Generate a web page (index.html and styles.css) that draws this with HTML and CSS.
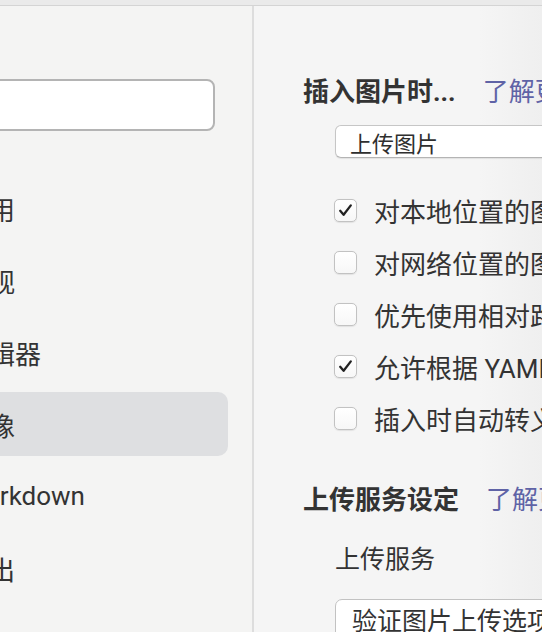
FILE: index.html
```html
<!DOCTYPE html>
<html lang="zh-CN">
<head>
<meta charset="utf-8">
<title>偏好设置 - 图像</title>
<link rel="stylesheet" href="styles.css">
</head>
<body>
<div class="titlebar"></div>
<div class="window">
  <aside class="sidebar">
    <div class="search"></div>
    <ul class="nav">
      <li class="nav-item">通用</li>
      <li class="nav-item">外观</li>
      <li class="nav-item">编辑器</li>
      <li class="nav-item active">图像</li>
      <li class="nav-item">Markdown</li>
      <li class="nav-item">导出</li>
    </ul>
  </aside>
  <main class="panel">
    <div class="section-head">
      <span class="section-title">插入图片时...</span>
      <span class="learn">了解更多</span>
    </div>
    <div class="select">上传图片</div>
    <div class="checks">
      <label class="check-row"><span class="box checked"><svg viewBox="0 0 23 23" width="23" height="23"><path d="M6.2 11.8 L9.6 15.8 L16.8 6.4" fill="none" stroke="#222" stroke-width="2.3" stroke-linecap="round" stroke-linejoin="round"/></svg></span><span class="check-text">对本地位置的图片应用上述规则</span></label>
      <label class="check-row"><span class="box"></span><span class="check-text">对网络位置的图片应用上述规则</span></label>
      <label class="check-row"><span class="box"></span><span class="check-text">优先使用相对路径</span></label>
      <label class="check-row"><span class="box checked"><svg viewBox="0 0 23 23" width="23" height="23"><path d="M6.2 11.8 L9.6 15.8 L16.8 6.4" fill="none" stroke="#222" stroke-width="2.3" stroke-linecap="round" stroke-linejoin="round"/></svg></span><span class="check-text">允许根据 YAML 设置自动上传图片</span></label>
      <label class="check-row"><span class="box"></span><span class="check-text">插入时自动转义图片 URL</span></label>
    </div>
    <div class="section-head second">
      <span class="section-title">上传服务设定</span>
      <span class="learn">了解更多</span>
    </div>
    <div class="field-label">上传服务</div>
    <div class="button">验证图片上传选项</div>
  </main>
</div>
</body>
</html>
```

FILE: styles.css
```css
html, body {
  margin: 0;
  padding: 0;
  width: 542px;
  height: 632px;
  overflow: hidden;
  background: #f4f4f3;
  font-family: Roboto, "Noto Sans CJK SC", "Noto Sans", sans-serif;
  color: #333;
}

.titlebar {
  height: 5px;
  background: #eaeaea;
  border-bottom: 1px solid #d4d4d4;
}

.window {
  display: flex;
  height: 626px;
}

.sidebar {
  flex: 0 0 252px;
  width: 252px;
  border-right: 2px solid #dddddd;
  background: #f4f4f3;
  padding-top: 73px;
  box-sizing: content-box;
  overflow: hidden;
}

.search {
  margin-left: -60px;
  width: 271px;
  height: 48px;
  border: 2px solid #b4b4b4;
  border-radius: 8px;
  background: #ffffff;
}

.nav {
  list-style: none;
  margin: 45px 0 0 -60px;
  padding: 0;
  width: 288px;
  display: flex;
  flex-direction: column;
  gap: 8px;
}

.nav-item {
  height: 64px;
  display: flex;
  align-items: center;
  padding-left: 23px;
  font-size: 26px;
  color: #333;
  border-radius: 10px;
  white-space: nowrap;
}

.nav-item.active {
  background: #dedfe1;
}

.panel {
  flex: 1;
  min-width: 0;
  overflow: hidden;
  background: linear-gradient(to right, #f5f5f5 0%, #f5f5f5 78%, #efefef 100%);
  padding-top: 66px;
  padding-left: 49px;
}

.section-head {
  height: 34px;
  display: flex;
  align-items: center;
  white-space: nowrap;
  font-size: 26px;
}

.section-head.second {
  margin-top: 36px;
}

.section-title {
  font-weight: bold;
  color: #333;
}

.learn {
  margin-left: 27px;
  color: #5f63a6;
}

.select {
  margin: 19px 0 0 32px;
  width: 260px;
  height: 31px;
  border: 1px solid #c6c6c6;
  border-bottom-color: #b4b4b4;
  border-radius: 6px;
  background: #ffffff;
  box-shadow: 0 1px 1px rgba(0, 0, 0, 0.08);
  display: flex;
  align-items: center;
  padding-left: 14px;
  font-size: 22px;
  color: #2f2f2f;
  white-space: nowrap;
}

.checks {
  margin: 26px 0 0 31px;
  display: flex;
  flex-direction: column;
}

.check-row {
  height: 52px;
  display: flex;
  align-items: center;
  white-space: nowrap;
}

.box {
  flex: 0 0 auto;
  width: 21px;
  height: 21px;
  border: 1px solid #c2c2c2;
  border-radius: 5px;
  background: linear-gradient(#ffffff, #f7f7f7);
  box-shadow: 0 0.5px 1px rgba(0, 0, 0, 0.08);
  display: flex;
  align-items: center;
  justify-content: center;
}

.box svg {
  display: block;
  flex: 0 0 auto;
}

.check-text {
  margin-left: 17px;
  font-size: 26px;
  color: #333;
}

.field-label {
  margin: 26px 0 0 32px;
  height: 34px;
  display: flex;
  align-items: center;
  font-size: 25px;
  color: #333;
  white-space: nowrap;
}

.button {
  margin: 25px 0 0 32px;
  width: 280px;
  height: 44px;
  border: 1px solid #c2c2c2;
  border-radius: 7px;
  background: #ffffff;
  padding: 5px 0 0 16px;
  box-sizing: border-box;
  font-size: 25px;
  line-height: 34px;
  color: #333;
  white-space: nowrap;
}
```
